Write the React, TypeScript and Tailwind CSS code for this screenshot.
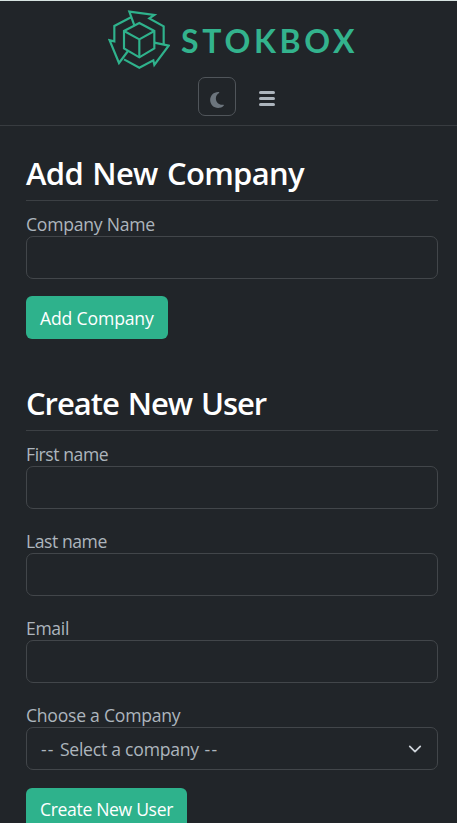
import type { ReactNode } from "react";

function Logo() {
  return (
    <div className="flex h-[60px] items-center pl-[108px]">
      <svg
        className="h-[60px] w-[62px] shrink-0"
        viewBox="24 28 186 180"
        fill="none"
        stroke="#2fb28c"
        strokeWidth="6.500"
        strokeLinejoin="miter"
      >
        <path d="M118 67 163 91V143L118 170 72 143V91Z" />
        <path d="M72 91 118 116 163 91M118 116V170" />
        <path d="M103 74 88 33 163 43 148 53 191 77V131" />
        <path d="M163 126 206 135 163 193 160 179 118 201 72 176" />
        <path d="M84 151 57 187 29 119 43 122V76L93 50" />
      </svg>
      <span className="mt-[2px] ml-[11px] whitespace-nowrap font-['Lato',sans-serif] text-[32px] leading-[40px] font-bold tracking-[3.7px] text-[#33b38d]">
        STOKBOX
      </span>
    </div>
  );
}

function Heading({ children, spacing }: { children: ReactNode; spacing: string }) {
  return (
    <h2 className={`h-[47px] border-b border-[#3c4044] text-[31px] leading-[38px] font-semibold whitespace-nowrap text-white ${spacing}`}>
      {children}
    </h2>
  );
}

function Label({ children, spacing }: { children: ReactNode; spacing: string }) {
  return <label className={`block h-[26px] leading-[28px] whitespace-nowrap ${spacing}`}>{children}</label>;
}

function Input() {
  return <input className="block h-[43px] w-full rounded-[7px] border border-[#42464a] bg-transparent px-[14px] outline-none" />;
}

export default function App() {
  return (
    <div className="h-[823px] overflow-hidden border-t border-[#d7e3e1] bg-[#212529] font-['Open_Sans','Noto_Sans',sans-serif] text-[17.6px] text-[#adb5bd]">
      <header className="h-[125px] border-b border-[#383c40] pt-[9px]">
        <Logo />
        <div className="mt-[7px] flex items-center pl-[198px]">
          <button className="flex h-[39px] w-[38px] items-center justify-center rounded-[7px] border border-[#50555a] pt-[7px]">
            <svg className="h-4 w-[14px]" viewBox="0 32 384 448" fill="#6c757d">
              <path d="M223.500 32C100 32 0 132.300 0 256S100 480 223.500 480c60.600 0 115.500-24.200 155.800-63.400c5-4.900 6.300-12.500 3.100-18.700s-10.100-9.700-17-8.500c-9.800 1.700-19.800 2.600-30.100 2.600c-96.900 0-175.500-78.800-175.500-176c0-65.800 36-123.100 89.300-153.300c6.100-3.500 9.200-10.500 7.700-17.300s-7.300-11.900-14.300-12.500c-6.300-.5-12.600-.8-19-.8z" />
            </svg>
          </button>
          <button className="ml-[23px] flex w-4 flex-col gap-[3px] pt-[4px]">
            <span className="h-[3px] rounded-full bg-[#adb5bd]" />
            <span className="h-[3px] rounded-full bg-[#adb5bd]" />
            <span className="h-[3px] rounded-full bg-[#adb5bd]" />
          </button>
        </div>
      </header>
      <main className="pt-[28px] pr-[19px] pl-[26px]">
        <form>
          <Heading spacing="tracking-[-0.7px] [word-spacing:2px]">Add New Company</Heading>
          <div className="mt-[9px]">
            <Label spacing="tracking-[-0.25px]">Company Name</Label>
            <Input />
          </div>
          <button type="button" className="mt-[17px] flex h-[43px] w-[142px] items-center rounded-[6px] bg-[#2eb28c] pt-[2px] pl-[14px] tracking-[-0.15px] whitespace-nowrap text-white">
            Add Company
          </button>
        </form>
        <form className="mt-[45px]">
          <Heading spacing="tracking-[-1.05px] [word-spacing:2px]">Create New User</Heading>
          <div className="mt-[9px] flex flex-col gap-[18px]">
            <div>
              <Label spacing="tracking-[-0.45px]">First name</Label>
              <Input />
            </div>
            <div>
              <Label spacing="tracking-[-0.45px]">Last name</Label>
              <Input />
            </div>
            <div>
              <Label spacing="tracking-[-0.35px]">Email</Label>
              <Input />
            </div>
            <div>
              <Label spacing="tracking-[-0.25px]">Choose a Company</Label>
              <div className="flex h-[43px] items-center justify-between rounded-[7px] border border-[#42464a] pr-[15px] pl-[14px]">
                <span className="pt-[2px] tracking-[-0.25px] whitespace-nowrap">
                  <span className="tracking-[1px]">-- </span>
                  Select a company
                  <span className="tracking-[1.2px]"> --</span>
                </span>
                <svg className="h-[14px] w-[14px]" viewBox="0 0 16 16" fill="none" stroke="#ced4da" strokeWidth="2" strokeLinecap="round" strokeLinejoin="round">
                  <path d="m2 5 6 6 6-6" />
                </svg>
              </div>
            </div>
          </div>
          <button type="button" className="mt-[18px] flex h-[43px] w-[161px] items-center rounded-[6px] bg-[#2eb28c] pl-[14px] tracking-[-0.35px] whitespace-nowrap text-white">
            Create New User
          </button>
        </form>
      </main>
    </div>
  );
}
